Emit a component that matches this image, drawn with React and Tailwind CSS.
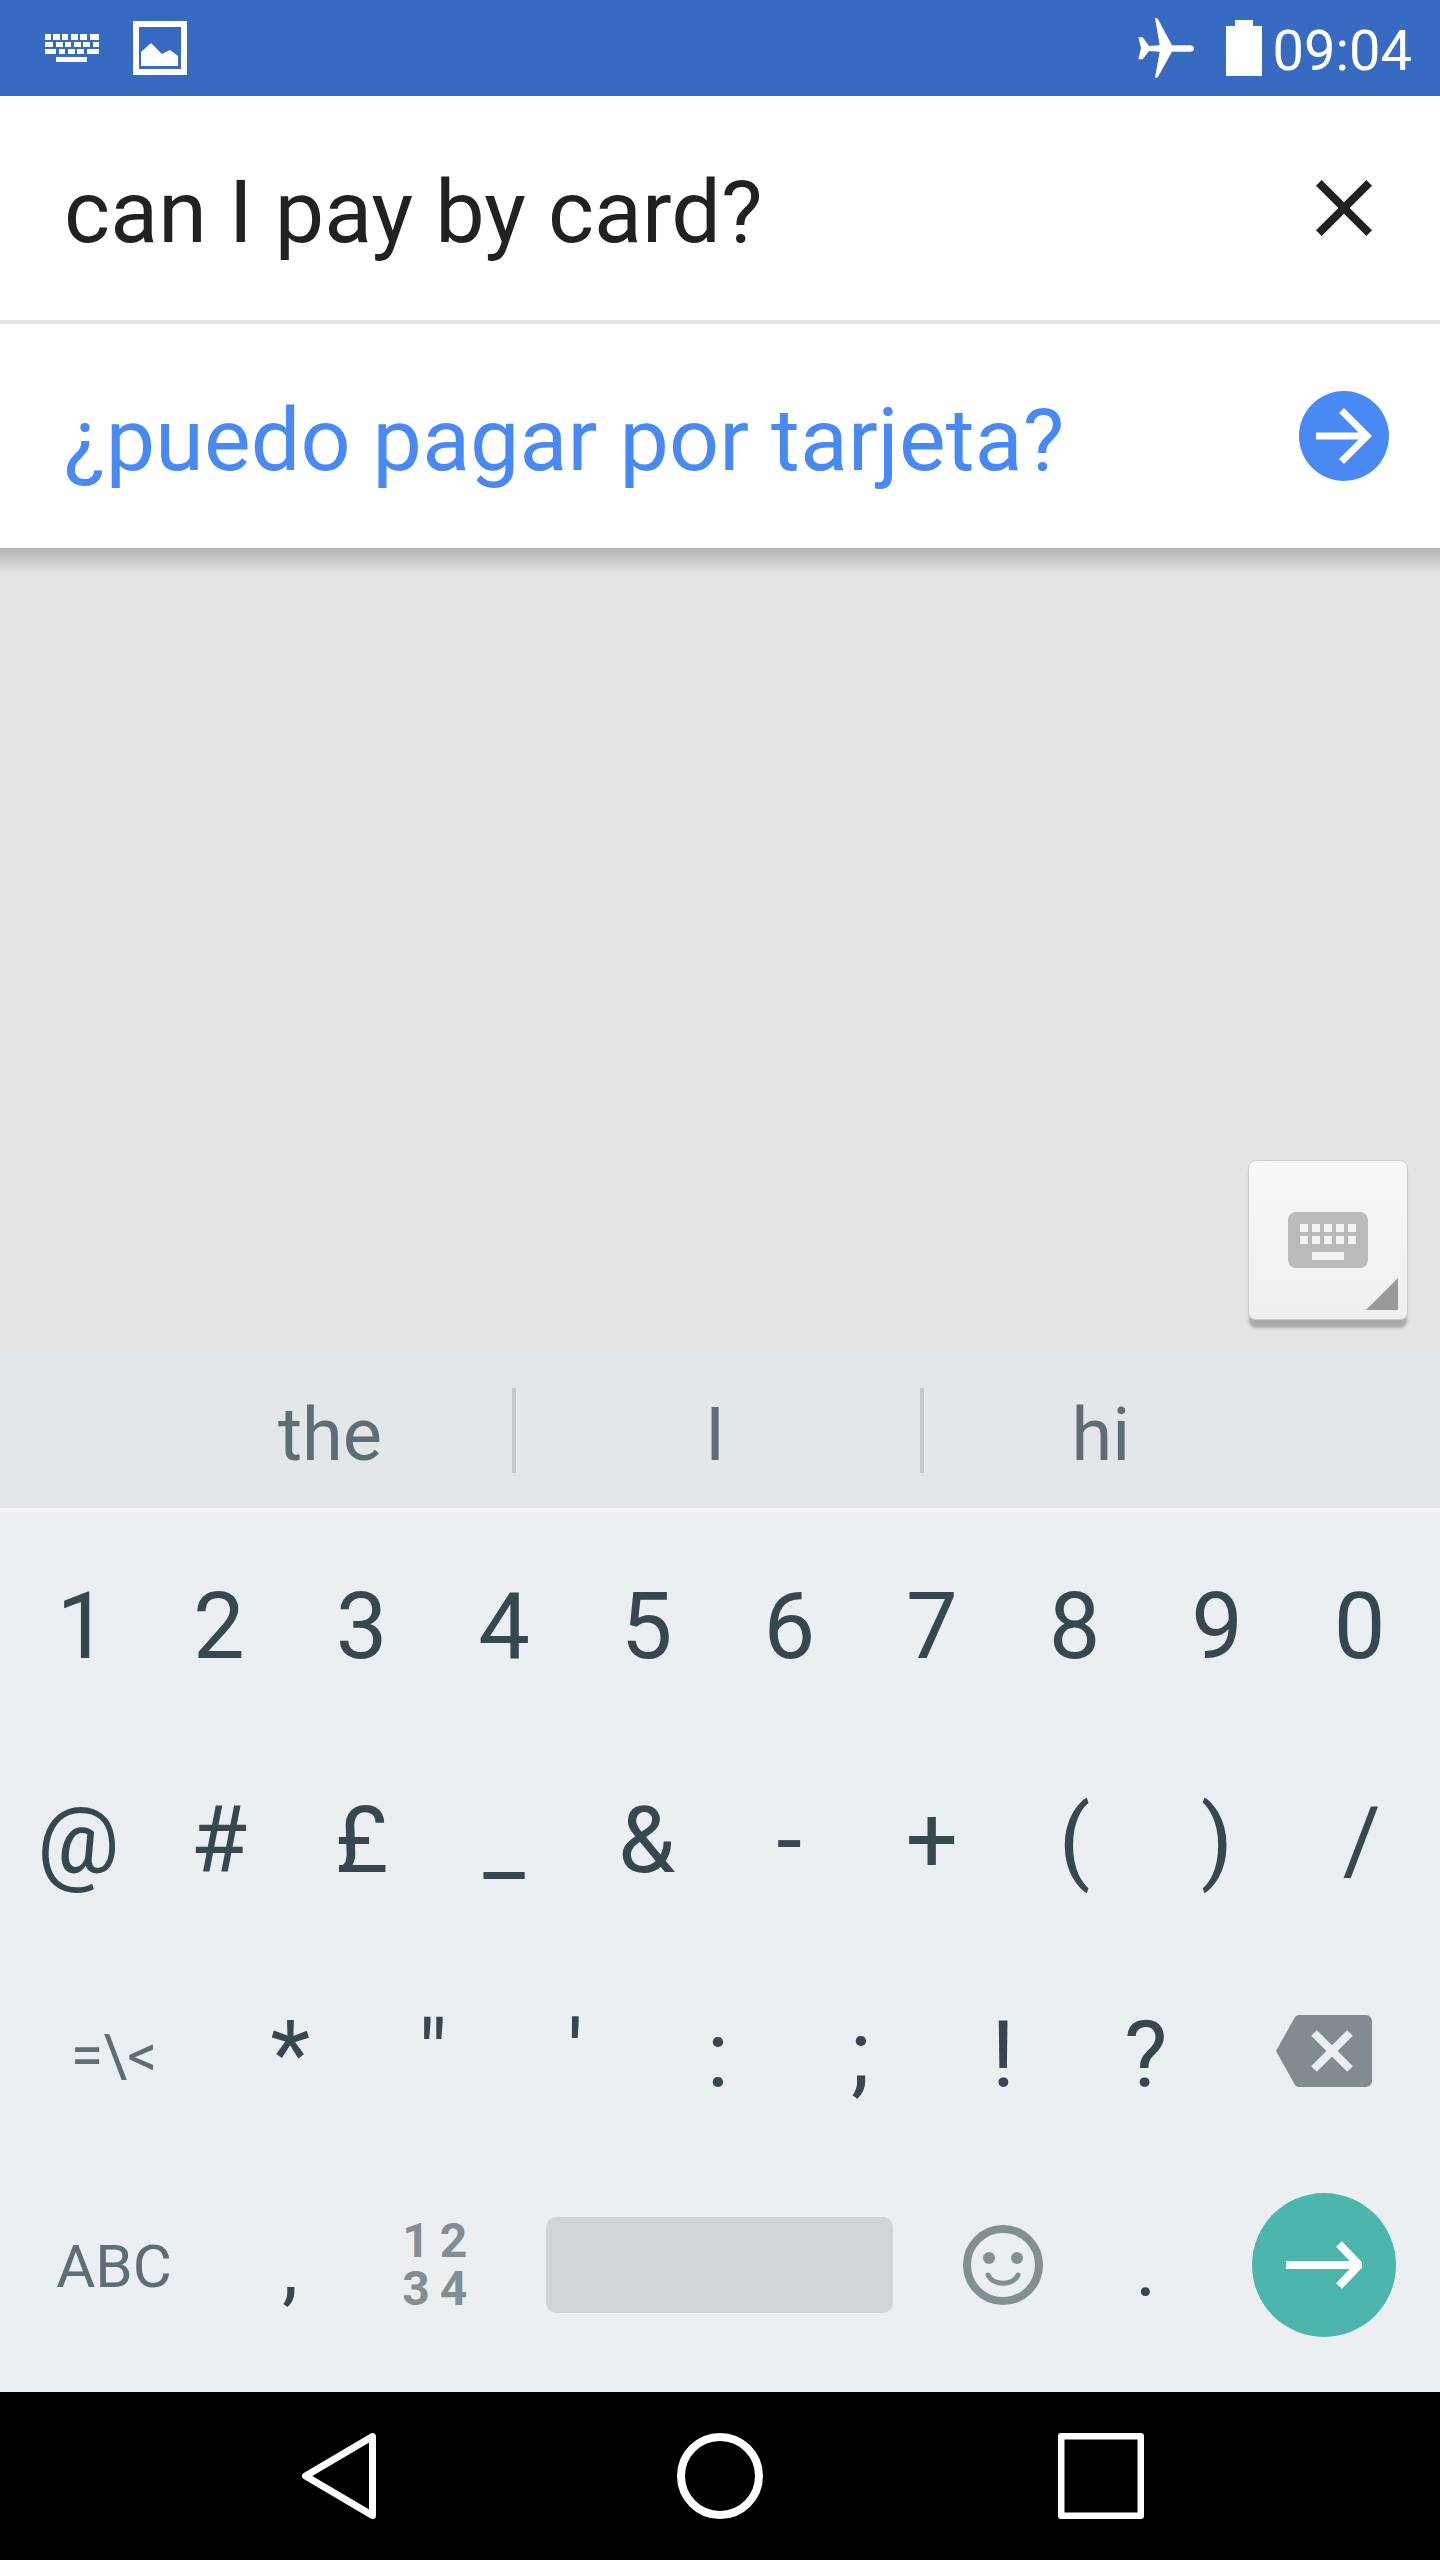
const F = { fontFamily: 'Roboto, sans-serif' };
const row1 = ['1','2','3','4','5','6','7','8','9','0'];
const row2 = ['@','#','£','_','&','-','+','(',')','/'];
const row3 = ['*','"',"'",':',';','!','?'];

function Key({ children, className = '' }) {
  return <div className={`flex items-center justify-center text-[92px] text-[#37474f] leading-none ${className}`}>{children}</div>;
}

function KeyboardStatusIcon() {
  const rows = [
    [34, 6, [[45,6],[53,7],[62,6],[71,7],[80,7],[90,9]]],
    [42, 5, [[45,8],[56,7],[65,6],[74,7],[83,7],[93,6]]],
    [49, 5, [[45,11],[59,6],[68,7],[77,7],[87,12]]],
    [57, 5, [[56,31]]],
  ];
  return (
    <svg width="54" height="28" viewBox="45 34 54 28" fill="#fff">
      {rows.map(([y, h, ks]) => ks.map(([x, w]) => <rect key={`${x}-${y}`} x={x} y={y} width={w} height={h} />))}
    </svg>
  );
}

function ImageIcon() {
  return (
    <svg width="54" height="54" viewBox="133 21 54 54">
      <rect x="136" y="24" width="48" height="48" fill="none" stroke="#fff" strokeWidth="6" />
      <path d="M141 52L151 43L162 54L170 50L178 56V66H141Z" fill="#fff" />
    </svg>
  );
}

function Plane() {
  return (
    <svg width="56" height="60" viewBox="117 54 168 180" fill="#fff">
      <path d="M168 54C172 54 175 55 177 58L219 136H272C280 136 285 141 285 146C285 151 280 155 272 155H219L177 230C175 233 172 233 168 233L182 155L150 153L131 178H118L126 145L118 112H131L150 138L182 136Z" />
    </svg>
  );
}

function Close() {
  return (
    <svg width="96" height="96" viewBox="0 0 24 24" fill="#212121">
      <path d="M19 6.410L17.590 5 12 10.590 6.410 5 5 6.410 10.590 12 5 17.590 6.410 19 12 13.410 17.590 19 19 17.590 13.410 12z" />
    </svg>
  );
}

function App() {
  return (
    <div className="w-[1440px] h-[2560px] flex flex-col bg-[#e4e4e4] overflow-hidden" style={F}>
      {/* status bar */}
      <div className="h-[96px] shrink-0 bg-[#376bc2] flex items-center pl-[45px] pr-[28px]">
        <div className="mt-[-1px]"><KeyboardStatusIcon /></div>
        <div className="ml-[34px]"><ImageIcon /></div>
        <div className="ml-auto flex items-center">
          <Plane />
          <svg className="ml-[32px]" width="36" height="56" viewBox="0 0 36 56" fill="#fff">
            <path d="M9 0H27V6H36V56H0V6H9Z" />
          </svg>
          <span className="ml-[11px] pt-[5px] text-[56px] leading-none text-white">09:04</span>
        </div>
      </div>

      {/* query */}
      <div className="h-[224px] shrink-0 bg-white flex items-center justify-between pl-[64px] pr-[48px]">
        <span className="text-[88px] leading-none pt-[8px] tracking-[0.1px] text-[#212121]">can I pay by card?</span>
        <Close />
      </div>
      <div className="h-[4px] shrink-0 bg-[#e4e4e4]" />

      {/* translation */}
      <div className="h-[224px] shrink-0 bg-white flex items-center justify-between pl-[64px] pr-[51px]">
        <span className="text-[88px] leading-none pt-[8px] tracking-[0.1px] text-[#4889f4]">¿puedo pagar por tarjeta?</span>
        <div className="w-[90px] h-[90px] rounded-full bg-[#4889f4] flex items-center justify-center">
          <svg width="84" height="84" viewBox="0 0 24 24" fill="#fff">
            <path d="M12 4l-1.410 1.410L16.170 11H4v2h12.170l-5.580 5.590L12 20l8-8z" />
          </svg>
        </div>
      </div>

      {/* empty area */}
      <div className="relative h-[804px] shrink-0 bg-[#e4e4e4]">
        <div className="h-[26px] bg-linear-to-b from-[#b3b3b3] to-[#e4e4e4]" />
        <div className="absolute right-[32px] bottom-[32px] w-[160px] h-[160px] rounded-[8px] border border-[#cccccc] bg-linear-to-b from-[#f8f8f8] to-[#efefef] shadow-[0_9px_3px_-1px_#a9a9a9]">
          <div className="absolute left-[39px] top-[51px] w-[80px] h-[56px] rounded-[8px] bg-[#bbbbbb]">
            <svg width="80" height="56" viewBox="0 0 80 56" fill="#f3f3f3">
              {[12,24,36,48,60].map((x) => <rect key={`a${x}`} x={x} y="12" width="8" height="8" />)}
              {[12,24,36,48,60].map((x) => <rect key={`b${x}`} x={x} y="24" width="8" height="8" />)}
              <rect x="24" y="40" width="32" height="8" />
            </svg>
          </div>
          <svg className="absolute left-[117px] top-[117px]" width="32" height="32" viewBox="0 0 32 32" fill="#999999">
            <path d="M32 0V32H0Z" />
          </svg>
        </div>
      </div>

      {/* suggestions */}
      <div className="h-[156px] shrink-0 bg-[#e4e7ea] flex items-center pl-[144px] text-[74px] leading-none text-[#5f6d75]">
        <div className="w-[368px] text-center pt-[10px] pl-[4px]">the</div>
        <div className="w-[4px] h-[85px] bg-[#c5cacd]" />
        <div className="w-[404px] text-center pt-[10px] pr-[6px]">I</div>
        <div className="w-[4px] h-[85px] bg-[#c5cacd]" />
        <div className="w-[358px] text-center pt-[10px] pr-[4px]">hi</div>
      </div>
      <div className="h-[4px] shrink-0 bg-[#f2f4f6]" />

      {/* keyboard */}
      <div className="h-[880px] shrink-0 bg-[#ebeff2] pl-[5px] pr-[9px] pt-[8px]">
        <div className="grid grid-cols-10 h-[214px]">
          {row1.map((k) => <Key key={k} className={k === '1' ? 'pl-[12px]' : ''}>{k}</Key>)}
        </div>
        <div className="grid grid-cols-10 h-[214px]">
          {row2.map((k) => <Key key={k} className={k === '@' ? 'pl-[4px]' : k === '/' ? 'pl-[4px]' : ''}>{k}</Key>)}
        </div>
        <div className="grid grid-cols-[3fr_repeat(7,2fr)_3fr] h-[214px]">
          <Key className="!text-[59px] !text-[#5f6d75] pl-[4px]">{'=\\<'}</Key>
          {row3.map((k) => <Key key={k}>{k}</Key>)}
          <div className="flex items-center justify-center pb-[8px]">
            <svg width="96" height="72" viewBox="0 0 96 72">
              <path d="M23 0H90C93 0 96 3 96 6V66C96 69 93 72 90 72H23C21 72 20 71 19 70L0 36L19 2C20 1 21 0 23 0Z" fill="#828c90" />
              <path d="M38 18L74 54M74 18L38 54" stroke="#ebeff2" strokeWidth="8" fill="none" />
            </svg>
          </div>
        </div>
        <div className="grid grid-cols-[3fr_2fr_2fr_6fr_2fr_2fr_3fr] h-[206px]">
          <Key className="!text-[60px] !text-[#5f6d75] pt-[4px] pl-[4px]">ABC</Key>
          <Key className="!text-[80px] pt-[8px]">,</Key>
          <div className="flex flex-col items-center justify-center text-[48px] leading-[48px] font-bold tracking-[10px] pl-[14px] text-[#838d92]">
            <span>12</span>
            <span>34</span>
          </div>
          <div className="flex items-center justify-center pl-[3px]">
            <div className="w-[347px] h-[96px] rounded-[10px] bg-[#d1d5d8]" />
          </div>
          <div className="flex items-center justify-center">
            <svg width="80" height="80" viewBox="0 0 80 80" fill="none">
              <circle cx="40" cy="40" r="36" stroke="#839093" strokeWidth="8" />
              <circle cx="26" cy="33" r="6" fill="#839093" />
              <circle cx="54" cy="33" r="6" fill="#839093" />
              <path d="M25 50C30 61 50 61 55 50" stroke="#839093" strokeWidth="5" strokeLinecap="round" />
            </svg>
          </div>
          <Key className="!text-[80px] pt-[8px]">.</Key>
          <div className="flex items-center justify-center">
            <div className="w-[144px] h-[144px] rounded-full bg-[#4db6ac] flex items-center justify-center">
              <svg width="76" height="48" viewBox="0 0 76 48" fill="none" stroke="#fff" strokeWidth="8">
                <path d="M0 24H73" />
                <path d="M53 3L73 24L53 45" />
              </svg>
            </div>
          </div>
        </div>
      </div>

      {/* nav bar */}
      <div className="h-[168px] shrink-0 bg-black flex items-center justify-center gap-[295px]">
        <svg width="86" height="86" viewBox="0 0 86 86" fill="none" stroke="#fff" strokeWidth="7" strokeLinejoin="round">
          <path d="M9.500 43L76.500 3.500V82.500Z" />
        </svg>
        <svg width="86" height="86" viewBox="0 0 86 86" fill="none" stroke="#fff" strokeWidth="8">
          <circle cx="43" cy="43" r="39" />
        </svg>
        <svg width="86" height="86" viewBox="0 0 86 86" fill="none" stroke="#fff" strokeWidth="6.500" strokeLinejoin="round">
          <rect x="3.250" y="3.250" width="79.500" height="79.500" />
        </svg>
      </div>
    </div>
  );
}

export default App;
